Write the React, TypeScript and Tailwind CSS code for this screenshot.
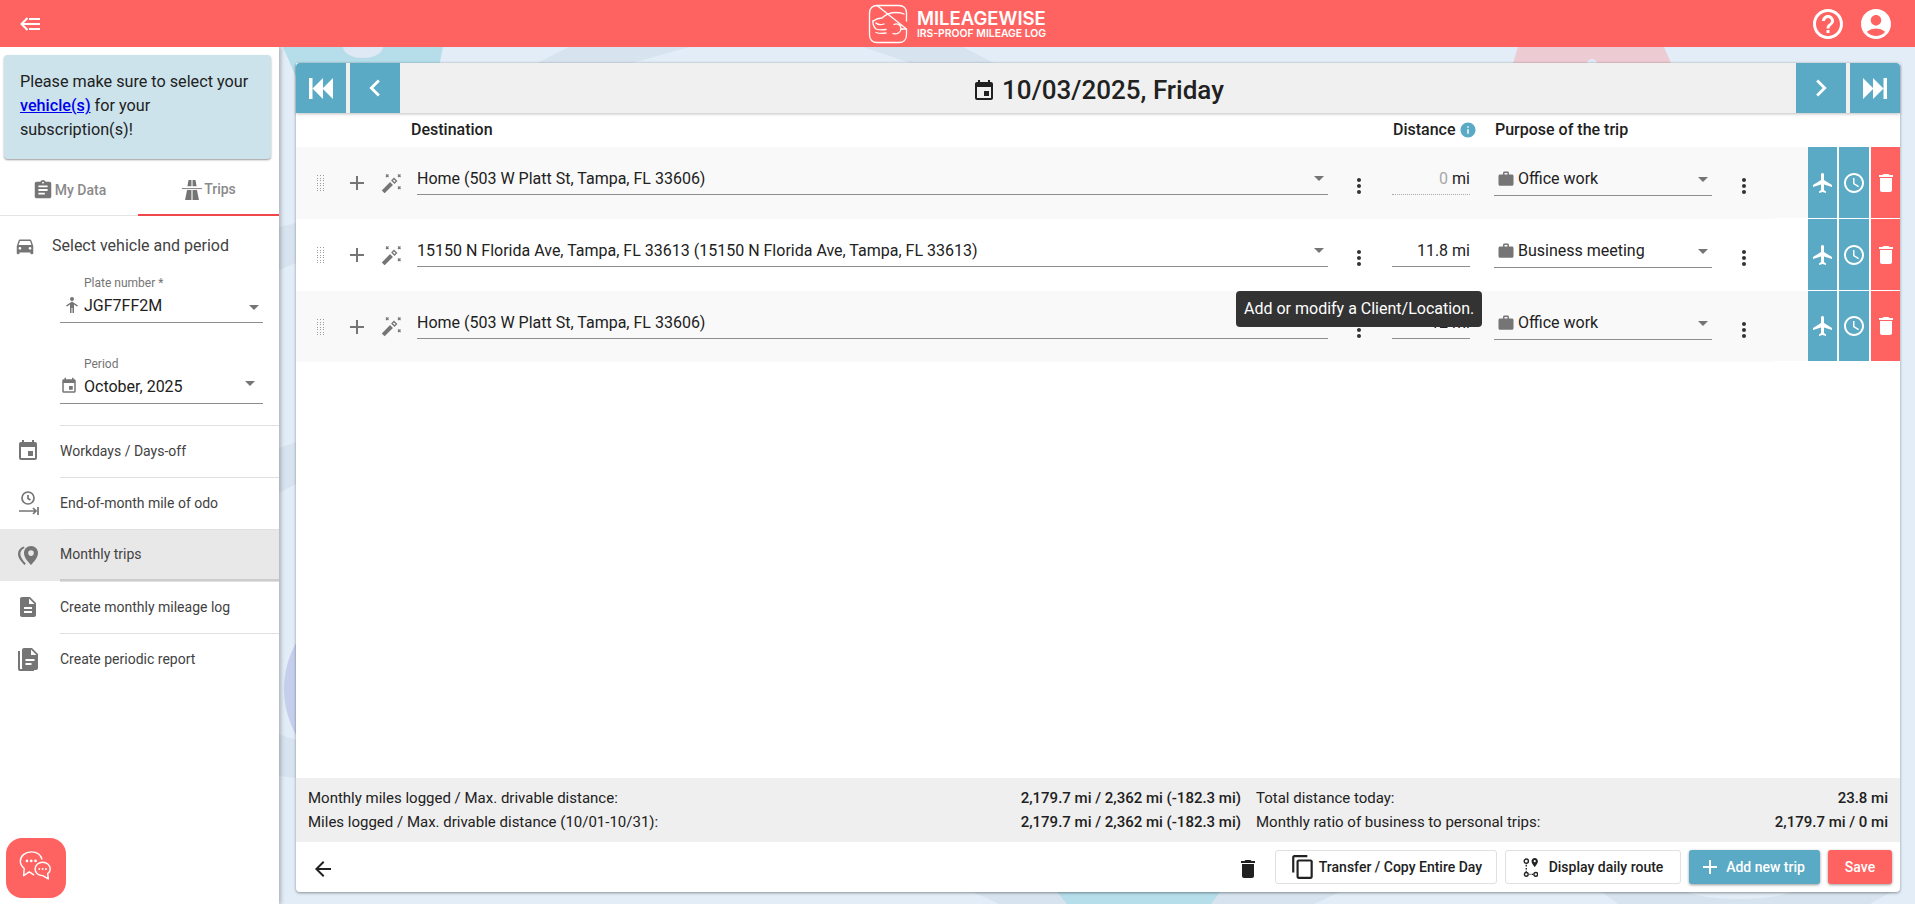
import React from "react";
import {
  MdAccountCircle,
  MdAdd,
  MdArrowBack,
  MdArrowDropDown,
  MdAssignment,
  MdChevronLeft,
  MdChevronRight,
  MdContentCopy,
  MdDelete,
  MdDescription,
  MdDirectionsCar,
  MdEvent,
  MdFlight,
  MdHelpOutline,
  MdInfo,
  MdMoreVert,
  MdOutlineAccessTime,
  MdWork,
} from "react-icons/md";

const rows = [
  {
    dest: "Home (503 W Platt St, Tampa, FL 33606)",
    dist: "0",
    purpose: "Office work",
    bg: "bg-[#f9f9f9] h-[72px]",
  },
  {
    dest: "15150 N Florida Ave, Tampa, FL 33613 (15150 N Florida Ave, Tampa, FL 33613)",
    dist: "11.8",
    purpose: "Business meeting",
    bg: "bg-white h-[72px]",
  },
  {
    dest: "Home (503 W Platt St, Tampa, FL 33606)",
    dist: "12",
    purpose: "Office work",
    bg: "bg-[#f9f9f9] h-[71px]",
  },
];

function RoadIcon({ className }: { className?: string }) {
  return (
    <svg viewBox="0 0 24 24" className={className} fill="currentColor">
      <path d="M1 10h22v1H1z" />
      <path d="M8.2 1h3.2v7H7zM12.6 1h3.2L17 8h-4.4zM6.6 12h4.8v11H4.4zM12.6 12h4.8l2.2 11h-7z" />
    </svg>
  );
}

function OdoIcon({ className }: { className?: string }) {
  return (
    <svg viewBox="0 0 24 24" className={className} fill="none" stroke="currentColor" strokeWidth="1.7">
      <circle cx="12" cy="7" r="6" />
      <path d="M12 4v3.5l2.5 1.5M3 20h17M17 17l3 3-3 3M22 16v8" />
    </svg>
  );
}

function TripPinIcon({ className }: { className?: string }) {
  return (
    <svg viewBox="0 0 24 24" className={className} fill="currentColor">
      <path
        fillRule="evenodd"
        d="M15 3c4 0 7 3 7 7 0 4.6-4 8.5-7 12-3-3.5-7-7.4-7-12 0-4 3-7 7-7zm0 4.3a2.8 2.8 0 1 0 0 5.600 2.8 2.8 0 0 0 0-5.600z"
      />
      <path d="M7.6 3.5C4 5 2 7.5 2 11c0 4 3.2 7.5 6.5 11l1.300-1.600C7 17.5 4.3 14 4.3 11c0-2.600 1.500-4.800 4.300-6z" />
    </svg>
  );
}

function ReportIcon({ className }: { className?: string }) {
  return (
    <svg viewBox="0 0 24 24" className={className} fill="currentColor">
      <path
        fillRule="evenodd"
        d="M8 1h8l6 6v14a2 2 0 0 1-2 2H8a2 2 0 0 1-2-2V3a2 2 0 0 1 2-2zM9.5 12v2h9v-2zM9.5 16v2h6v-2zM15 2.5V8h5.500z"
      />
      <path d="M2 4h2v18h14v2H4a2 2 0 0 1-2-2z" />
    </svg>
  );
}

function PersonIcon({ className }: { className?: string }) {
  return (
    <svg viewBox="0 0 12 16" className={className} fill="currentColor">
      <circle cx="6" cy="2" r="2" />
      <path d="M6 4.5l6 4-1 1-3-2V16H6.5v-5h-1v5H4V7.5l-3 2-1-1z" />
    </svg>
  );
}

function SkipIcon({ className }: { className?: string }) {
  return (
    <svg viewBox="0 0 24 21" className={className} fill="currentColor">
      <path d="M0 0h3.5v21H0zM3.5 10.500 14 0v21zM13.500 10.500 24 0v21z" />
    </svg>
  );
}

function GripIcon({ className }: { className?: string }) {
  const dots = [];
  for (let r = 0; r < 7; r++) {
    for (let c = 0; c < 3; c++) {
      dots.push(<rect key={`${r}-${c}`} x={c * 3} y={r * 2.5} width="1" height="1" />);
    }
  }
  return (
    <svg viewBox="0 0 7 16" className={className} fill="currentColor" shapeRendering="crispEdges">
      {dots}
    </svg>
  );
}

function WandIcon({ className }: { className?: string }) {
  return (
    <svg viewBox="0 0 21 21" className={className} fill="none" stroke="currentColor">
      <path strokeWidth="4" d="M2.2 18.800 10.500 10.500" />
      <path strokeWidth="1.300" d="M11 7.500l2.500 2.500 2-2-2.500-2.500z" />
      <path strokeWidth="1.200" d="M5 1.500l2.500 2.500M7.500 1.500 5 4M17 1.500l2.500 2.500M19.500 1.500 17 4M17 13.500l2.500 2.500M19.500 13.500 17 16" />
    </svg>
  );
}

function RouteIcon({ className }: { className?: string }) {
  return (
    <svg viewBox="0 0 14 18" className={className} fill="none" stroke="currentColor" strokeWidth="1.300">
      <circle cx="3" cy="3" r="2" />
      <circle cx="3" cy="15.500" r="1.800" />
      <circle cx="12" cy="15.500" r="1.800" />
      <path d="M3 6.500v1.500M3 9.500v1.500M3 12v1M6 15.500h1M8 15.500h1.500" />
      <path
        fill="currentColor"
        stroke="none"
        fillRule="evenodd"
        d="M11 0c-1.700 0-3 1.300-3 3 0 2.200 3 5.500 3 5.500s3-3.300 3-5.500c0-1.700-1.300-3-3-3zm0 2a1 1 0 1 1 0 2 1 1 0 0 1 0-2z"
      />
    </svg>
  );
}

function ChatIcon({ className }: { className?: string }) {
  return (
    <svg viewBox="0 0 40 40" className={className} fill="none" stroke="currentColor" strokeWidth="1.500" strokeLinejoin="round">
      <path d="M18 27.500 13 24 7 28l.6-7.500C5 18.500 3.500 15.500 3.500 13 3.500 7.500 8.500 3 15 3c5.500 0 10 3 11.500 8" />
      <path d="M27 14c-4.500 0-8 3-8 7s3.500 7 8 7l6 3.500-.7-5.500c2-1.300 2.700-3 2.700-5 0-4-3.500-7-8-7z" />
      <g fill="currentColor" stroke="none">
        <circle cx="10.500" cy="12.500" r="1.400" />
        <circle cx="15" cy="12.500" r="1.400" />
        <circle cx="19.500" cy="12.500" r="1.400" />
        <circle cx="23.500" cy="21" r="1" />
        <circle cx="27" cy="21" r="1" />
        <circle cx="30.500" cy="21" r="1" />
      </g>
    </svg>
  );
}

function LogoMark() {
  return (
    <svg viewBox="0 0 40 40" className="h-[40px] w-[40px] text-white" fill="none" stroke="currentColor" strokeWidth="1.300" strokeLinecap="round">
      <path d="M9 1.500h22c4.500 0 7.500 3 7.500 7.500v8M38.500 25v6c0 4.500-3 7.500-7.500 7.500H9c-4.500 0-7.500-3-7.500-7.500V9C1.500 4.500 4.500 1.500 9 1.500z" />
      <path d="M5 17c3-2 6-3 9-3 3-3 9-5.500 14-5.500 3 0 6 .5 8 1.500" />
      <path d="M5 17c-.5 3 1 6 3 8 3 1 7 1 10 .5M8 19c2 2 5 2 8 1M8 28.500c3 1 7 1 10 .5" />
      <path d="M26 20.500c3-1.500 7 0 7 4s-4 6.500-8 5" />
      <path d="M33 25h5" />
    </svg>
  );
}

export default function App() {
  return (
    <div className="flex h-[904px] w-[1915px] flex-col overflow-hidden bg-[#e3edf7] font-['Roboto',sans-serif] text-[#212121]">
      {/* Top bar */}
      <header className="z-20 flex h-[47px] shrink-0 items-center bg-[#ff6361] pl-[20px] pr-[21px] text-white">
        <div className="flex flex-1">
          <svg viewBox="0 0 20 14" className="h-[14px] w-[20px]" fill="none" stroke="currentColor" strokeWidth="2">
            <path d="M7.5 1 1.5 7l6 6M2 7h18M9 2h11M9 12h11" />
          </svg>
        </div>
        <div className="flex items-center gap-[9px]">
          <LogoMark />
          <div className="flex flex-col font-['Inter',sans-serif]">
            <span className="text-[18.5px] font-semibold leading-[20px]">MILEAGEWISE</span>
            <span className="text-[10.4px] font-semibold leading-[12px]">IRS-PROOF MILEAGE LOG</span>
          </div>
        </div>
        <div className="flex flex-1 items-center justify-end gap-[12px]">
          <MdHelpOutline className="h-[36px] w-[36px]" />
          <MdAccountCircle className="h-[36px] w-[36px]" />
        </div>
      </header>

      <div className="flex min-h-0 flex-1">
        {/* Sidebar */}
        <aside className="z-10 flex w-[279px] shrink-0 flex-col bg-white shadow-[2px_0_4px_rgba(0,0,0,0.25)]">
          <div className="ml-[4px] mr-[8px] mt-[8px] h-[104px] rounded-[4px] bg-[#cce3ec] px-[16px] py-[15px] text-[16.2px] leading-[24px] shadow-[0_1px_2px_rgba(0,0,0,0.4)]">
            Please make sure to select your <a className="font-medium text-[#0000ee] underline">vehicle(s)</a> for your subscription(s)!
          </div>

          <div className="flex h-[57px] border-b border-[#e4e4e4] text-[14px] font-medium text-[#8a8a8a]">
            <div className="flex w-[138px] items-center justify-center gap-[1px] pt-[6px]">
              <MdAssignment className="h-[22px] w-[22px] text-[#757575]" />
              My Data
            </div>
            <div className="-mb-px flex w-[141px] items-center justify-center gap-[1px] border-b-2 border-[#f04848] pt-[6px]">
              <RoadIcon className="h-[22px] w-[22px] text-[#757575]" />
              Trips
            </div>
          </div>

          <div className="flex h-[58px] items-center pl-[14px] pt-[2px] text-[16px] text-[#424242]">
            <MdDirectionsCar className="h-[22px] w-[22px] text-[#757575]" />
            <span className="ml-[16px]">Select vehicle and period</span>
          </div>

          <div className="ml-[60px] mr-[16px] mt-[2px] h-[47px] border-b border-[#8e8e8e]">
            <div className="pl-[24px] text-[12px] leading-[14px] text-[#757575]">Plate number *</div>
            <div className="flex h-[30px] items-center text-[16px]">
              <span className="flex w-[24px] justify-center">
                <PersonIcon className="h-[16px] w-[12px] text-[#757575]" />
              </span>
              <span className="flex-1 pt-[1px]">JGF7FF2M</span>
              <MdArrowDropDown className="-mr-[3px] mt-[4px] h-[24px] w-[24px] text-[#757575]" />
            </div>
          </div>

          <div className="ml-[60px] mr-[16px] mt-[34px] h-[47px] border-b border-[#8e8e8e]">
            <div className="pl-[24px] text-[12px] leading-[14px] text-[#757575]">Period</div>
            <div className="flex h-[30px] items-center text-[16px]">
              <MdEvent className="-ml-[3px] mr-[3px] h-[18px] w-[24px] text-[#757575]" />
              <span className="flex-1 pt-[1px]">October, 2025</span>
              <MdArrowDropDown className="mb-[6px] mr-[1px] h-[24px] w-[24px] text-[#757575]" />
            </div>
          </div>

          <nav className="mt-[21px] text-[14px] text-[#424242]">
            {[
              { label: "Workdays / Days-off", Icon: MdEvent },
              { label: "End-of-month mile of odo", Icon: OdoIcon },
              { label: "Monthly trips", Icon: TripPinIcon, active: true },
              { label: "Create monthly mileage log", Icon: MdDescription },
              { label: "Create periodic report", Icon: ReportIcon },
            ].map(({ label, Icon, active }) => (
              <div key={label} className={`flex h-[52px] ${active ? "bg-[#e8e8e8]" : ""}`}>
                <div className="flex w-[60px] items-center pl-[16px]">
                  <Icon className="h-[24px] w-[24px] text-[#757575]" />
                </div>
                <div className={`flex flex-1 items-center border-t border-[#e0e0e0] ${active ? "border-b-2 border-b-[#cccccc]" : ""}`}>
                  {label}
                </div>
              </div>
            ))}
          </nav>

          <div className="mb-[6px] ml-[6px] mt-auto flex h-[60px] w-[60px] items-center justify-center rounded-[16px] bg-[#ff6361] text-white">
            <ChatIcon className="h-[38px] w-[38px]" />
          </div>
        </aside>

        {/* Main area with faint decorative background */}
        <main className="relative min-w-0 flex-1 pb-[12px] pl-[17px] pr-[15px] pt-[16px]">
          <svg className="absolute inset-0 h-full w-full" viewBox="0 0 1636 857" preserveAspectRatio="none">
            <path d="M4 0H164L160 20H17V30z" fill="#b6deea" />
            <ellipse cx="84" cy="0" rx="20" ry="11" fill="#dfe9f5" />
            <path d="M258 16 290 0H684L715 16H631L584 0H411L353 16z" fill="#d7e4ef" />
            <path d="M1234 16 1239 0H1385L1392 16z" fill="#edcbd2" />
            <ellipse cx="1313" cy="16" rx="5" ry="4" fill="#dfe9f5" />
            <path d="M0 180 17 176V216L0 223zM0 401 17 395V437L0 446zM0 687 17 693V731L0 729z" fill="#d7e4ef" />
            <circle cx="99" cy="642" r="94" fill="#c5cfec" />
            <path d="M694 845H1061L1035 857H720z" fill="#d7e4ef" />
            <path d="M778 845H941L932 857H788z" fill="#b6deea" />
            <path d="M1323 845H1612L1591 857H1339z" fill="#d7e4ef" />
            <ellipse cx="1460" cy="838" rx="60" ry="14" fill="#e3edf7" />
          </svg>

          <section className="relative flex h-full flex-col rounded-[4px] bg-white shadow-[0_1px_3px_rgba(0,0,0,0.4)]">
            {/* Date navigation */}
            <div className="z-[1] flex h-[50px] shrink-0 bg-[#f0f0f0] shadow-[0_1px_3px_rgba(0,0,0,0.25)]">
              <button className="flex w-[50px] items-center justify-center rounded-tl-[4px] bg-[#5aa9c5] text-white">
                <SkipIcon className="h-[21px] w-[24px]" />
              </button>
              <button className="ml-[4px] flex w-[50px] items-center justify-center bg-[#5aa9c5] text-white">
                <MdChevronLeft className="h-[34px] w-[34px]" />
              </button>
              <div className="flex flex-1 items-center justify-center gap-[6px] pt-[5px] text-[26px] font-medium">
                <MdEvent className="h-[24px] w-[24px]" />
                10/03/2025, Friday
              </div>
              <button className="flex w-[50px] items-center justify-center bg-[#5aa9c5] text-white">
                <MdChevronRight className="h-[34px] w-[34px]" />
              </button>
              <button className="ml-[4px] flex w-[50px] items-center justify-center rounded-tr-[4px] bg-[#5aa9c5] text-white">
                <SkipIcon className="h-[21px] w-[24px] rotate-180" />
              </button>
            </div>

            {/* Column titles */}
            <div className="flex h-[34px] shrink-0 items-center text-[16px] font-medium">
              <span className="ml-[115px] w-[982px]">Destination</span>
              <span className="flex w-[102px] items-center gap-[3px]">
                Distance
                <MdInfo className="h-[18px] w-[18px] text-[#5aa9c5]" />
              </span>
              <span>Purpose of the trip</span>
            </div>

            {/* Trip rows */}
            {rows.map((row, i) => (
              <div key={i} className={`flex shrink-0 ${row.bg}`}>
                <div className="flex w-[121px] items-center pl-[17px]">
                  <span className="flex w-[14px] justify-center">
                    <GripIcon className="h-[16px] w-[7px] text-[#9e9e9e]" />
                  </span>
                  <MdAdd className="ml-[18px] h-[24px] w-[24px] text-[#757575]" />
                  <WandIcon className="ml-[12px] h-[21px] w-[21px] text-[#757575]" />
                </div>
                <div className="mt-[15px] flex h-[33px] w-[911px] items-center border-b border-[#8e8e8e] text-[16px]">
                  <span className="flex-1 pt-[2px]">{row.dest}</span>
                  <MdArrowDropDown className="-mr-[3px] h-[24px] w-[24px] text-[#757575]" />
                </div>
                <div className="flex w-[64px] items-center justify-center pr-[2px] pt-[6px]">
                  <MdMoreVert className="h-[24px] w-[24px] text-[#333333]" />
                </div>
                <div
                  className={`mt-[15px] flex h-[33px] w-[78px] items-center justify-end pt-[2px] text-[16px] ${
                    i === 0 ? "border-b border-dotted border-[#aaaaaa]" : "border-b border-[#8e8e8e]"
                  }`}
                >
                  <span className={i === 0 ? "text-[#a8a8a8]" : ""}>{row.dist}</span>&nbsp;mi
                </div>
                <div className="ml-[24px] mt-[16px] flex h-[33px] w-[218px] items-center border-b border-[#8e8e8e] pl-[3px] text-[16px]">
                  <MdWork className="mr-[3px] h-[18px] w-[18px] text-[#757575]" />
                  <span className="flex-1">{row.purpose}</span>
                  <MdArrowDropDown className="-mr-[3px] h-[24px] w-[24px] text-[#757575]" />
                </div>
                <div className="flex w-[62px] items-center justify-center pl-[1px] pt-[6px]">
                  <MdMoreVert className="h-[24px] w-[24px] text-[#333333]" />
                </div>
                <div className="flex flex-1 justify-end gap-[2px] border-b border-white text-white">
                  <div className="flex w-[29px] items-center justify-center bg-[#5aa9c5]">
                    <MdFlight className="h-[24px] w-[24px]" />
                  </div>
                  <div className="flex w-[30px] items-center justify-center bg-[#5aa9c5]">
                    <MdOutlineAccessTime className="h-[24px] w-[24px]" />
                  </div>
                  <div className="flex w-[29px] items-center justify-center bg-[#ff6361]">
                    <MdDelete className="h-[24px] w-[24px]" />
                  </div>
                </div>
              </div>
            ))}

            <div className="absolute left-[940px] top-[228px] z-10 flex h-[36px] items-center whitespace-nowrap rounded-[4px] bg-[#333333] px-[8px] text-[16px] text-white">
              Add or modify a Client/Location.
            </div>

            {/* Monthly totals */}
            <div className="mt-auto grid h-[64px] shrink-0 grid-cols-[933px_1fr] content-center gap-x-[15px] gap-y-[6px] bg-[#efefef] px-[12px] text-[15px] leading-[18px]">
              <div className="flex justify-between">
                <span>Monthly miles logged / Max. drivable distance:</span>
                <b className="font-medium">2,179.7 mi / 2,362 mi (-182.3 mi)</b>
              </div>
              <div className="flex justify-between">
                <span>Total distance today:</span>
                <b className="font-medium">23.8 mi</b>
              </div>
              <div className="flex justify-between">
                <span>Miles logged / Max. drivable distance (10/01-10/31):</span>
                <b className="font-medium">2,179.7 mi / 2,362 mi (-182.3 mi)</b>
              </div>
              <div className="flex justify-between">
                <span>Monthly ratio of business to personal trips:</span>
                <b className="font-medium">2,179.7 mi / 0 mi</b>
              </div>
            </div>

            {/* Bottom actions */}
            <div className="flex h-[50px] shrink-0 items-center pl-[10px] pr-[8px] text-[14px] font-medium">
              <MdArrowBack className="ml-[5px] mt-[3px] h-[24px] w-[24px]" />
              <MdDelete className="ml-auto mr-[1px] mt-[3px] h-[24px] w-[24px]" />
              <button className="ml-[14px] flex h-[34px] w-[222px] items-center justify-center gap-[3px] rounded-[3px] border border-[#e0e0e0] bg-white">
                <MdContentCopy className="h-[26px] w-[26px]" />
                Transfer / Copy Entire Day
              </button>
              <button className="ml-[8px] flex h-[34px] w-[176px] items-center justify-center gap-[11px] rounded-[3px] border border-[#e0e0e0] bg-white">
                <RouteIcon className="h-[19px] w-[15px]" />
                Display daily route
              </button>
              <button className="ml-[8px] flex h-[34px] w-[131px] items-center justify-center gap-[4px] rounded-[3px] bg-[#5aa9c5] pr-[6px] text-white shadow-[0_1px_3px_rgba(0,0,0,0.4)]">
                <MdAdd className="h-[24px] w-[24px]" />
                Add new trip
              </button>
              <button className="ml-[8px] flex h-[34px] w-[64px] items-center justify-center rounded-[3px] bg-[#ff6361] text-white shadow-[0_1px_3px_rgba(0,0,0,0.4)]">
                Save
              </button>
            </div>
          </section>
        </main>
      </div>
    </div>
  );
}
